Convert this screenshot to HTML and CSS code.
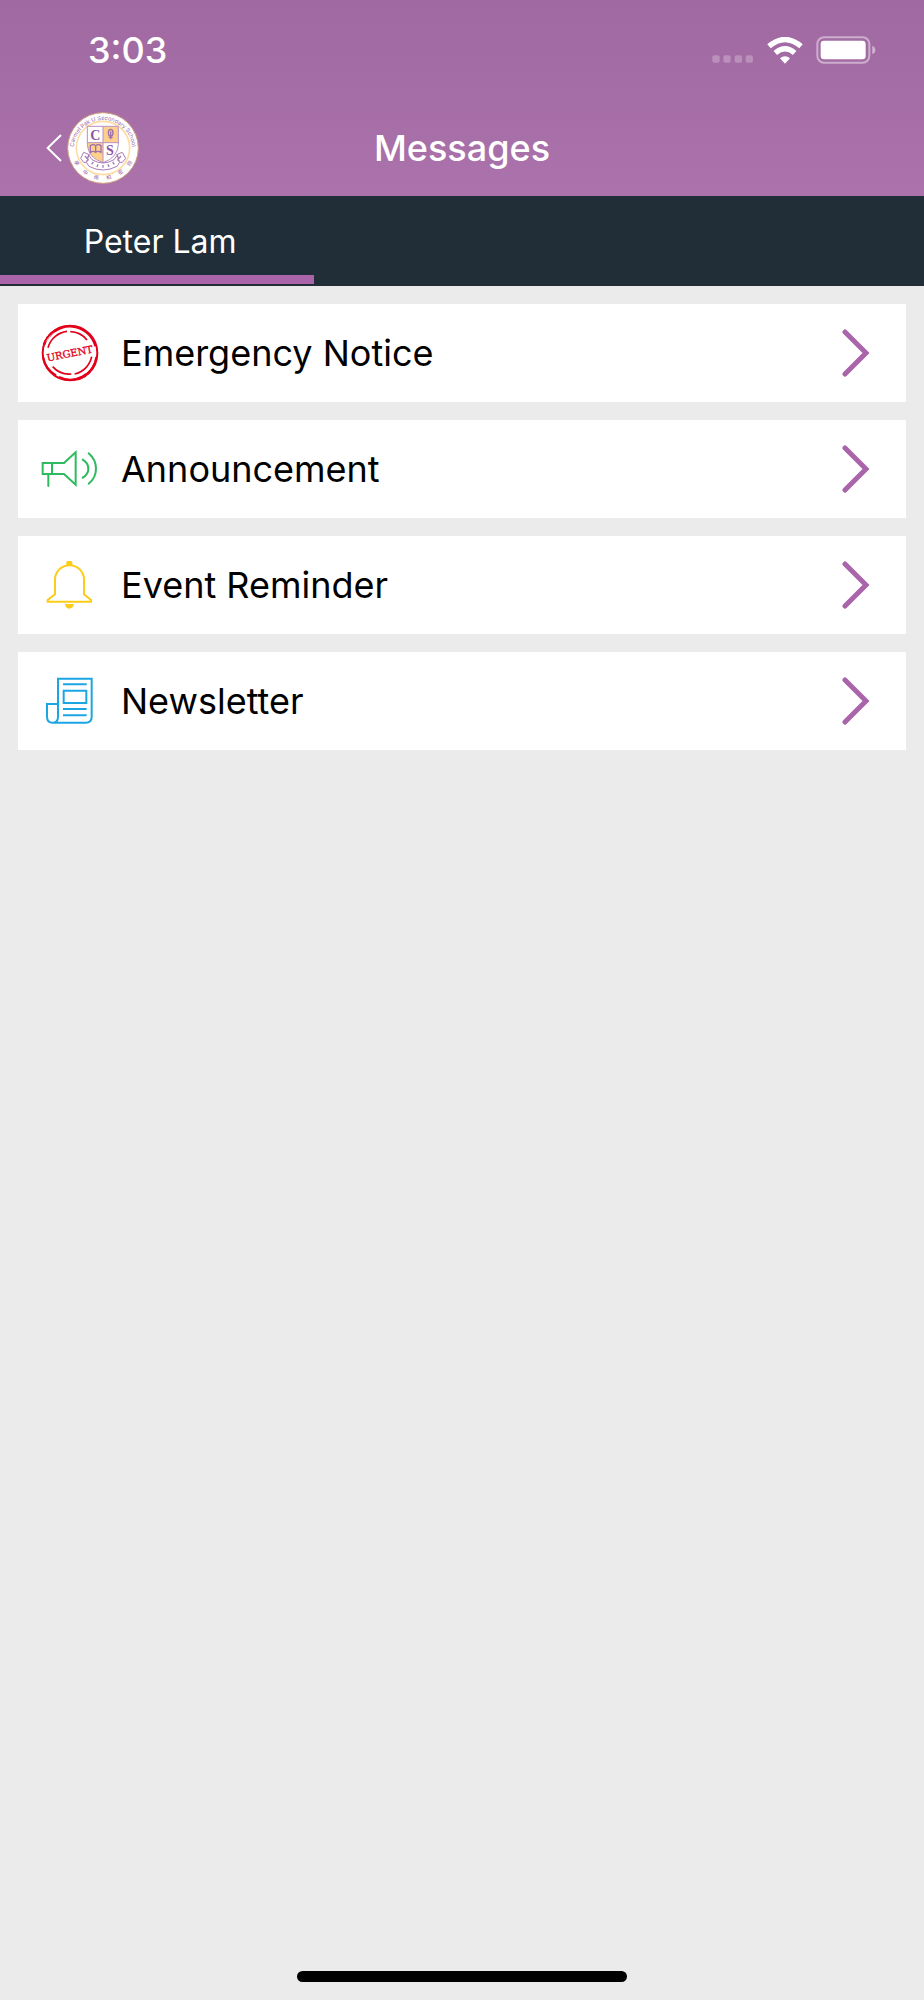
FILE: index.html
```html
<!DOCTYPE html>
<html lang="en">
<head>
<meta charset="utf-8">
<meta name="viewport" content="width=device-width, initial-scale=1">
<title>Messages</title>
<link rel="stylesheet" href="styles.css">
</head>
<body>
<header class="header">
  <div class="status">
    <time class="clock">3:03</time>
    <div class="indicators">
      <svg class="signal" viewBox="0 0 126 24" aria-hidden="true"><g fill="#fff" fill-opacity=".25"><rect x="1" y="1" width="22" height="22" rx="6"/><rect x="34" y="1" width="22" height="22" rx="6"/><rect x="68" y="1" width="22" height="22" rx="6"/><rect x="101" y="1" width="22" height="22" rx="6"/></g></svg>
      <svg class="wifi" viewBox="0 0 108 81" aria-hidden="true"><g fill="none" stroke="#fff" stroke-width="16"><path d="M6 28Q54-13 102 28"/><path d="M25 48Q54 23 83 48"/></g><path d="M39 64Q54 51 69 64L54 80Z" fill="#fff"/></svg>
      <svg class="battery" viewBox="0 0 180 84" aria-hidden="true"><rect x="4" y="4" width="156" height="76" rx="20" fill="none" stroke="#fff" stroke-opacity=".45" stroke-width="6"/><rect x="14" y="14" width="135" height="56" rx="10" fill="#fff"/><path d="M169 29Q178 33 178 42T169 55Z" fill="#fff" fill-opacity=".5"/></svg>
    </div>
  </div>
  <div class="nav">
    <button class="back" type="button" aria-label="Back">
      <svg class="back-arrow" viewBox="0 0 48 84" aria-hidden="true"><path d="M45 3L5 42L45 81" fill="none" stroke="#fff" stroke-width="6"/></svg>
      <svg class="crest" viewBox="0 0 216 216" aria-hidden="true">
        <defs><path id="motto-arc" d="M20 112A88 88 0 0 1 196 112"/></defs>
        <circle cx="108" cy="108" r="106" fill="#fff" stroke="#cf9d7c" stroke-width="3"/>
        <circle cx="108" cy="108" r="80" fill="none" stroke="#fddda4" stroke-width="5"/>
        <text class="crest-name"><textPath href="#motto-arc" startOffset="50%" text-anchor="middle">Carmel Pak U Secondary School</textPath></text>
        <g class="crest-han" text-anchor="middle">
          <text transform="translate(29 153) rotate(60)" y="6">學</text>
          <text transform="translate(55 181) rotate(36)" y="6">中</text>
          <text transform="translate(88 195) rotate(12)" y="6">雨</text>
          <text transform="translate(125 195) rotate(-12)" y="6">柏</text>
          <text transform="translate(160 180) rotate(-36)" y="6">密</text>
          <text transform="translate(187 153) rotate(-60)" y="6">迦</text>
        </g>
        <path d="M108 44H153V92H108ZM62 92H108V151Q66 137 62 102Z" fill="#fdd08b"/>
        <path d="M61 43H154V98Q152 137 108 152Q63 137 61 98ZM108 43V152M61 92H154" fill="none" stroke="#b98fc2" stroke-width="3"/>
        <text class="crest-letter" x="85" y="84" text-anchor="middle">C</text>
        <text class="crest-letter" x="129" y="128" text-anchor="middle">S</text>
        <g fill="none" stroke="#9f6eac" stroke-width="4"><ellipse cx="131" cy="62" rx="7" ry="10"/><path d="M131 58V82M125 76H137M70 101Q79 95 86 101Q93 95 102 101V121Q93 115 86 121Q79 115 70 121ZM86 101V121"/></g>
        <path d="M50 121L63 126L75 143Q108 163 141 143L153 126L166 121L176 139L166 151L158 151L150 163Q108 185 66 163L58 151L50 151L41 139Z" fill="#fff" stroke="#a97bb4" stroke-width="3"/>
        <path d="M54 132L65 145M162 132L151 145M74 157L79 150M90 165L93 157M108 167V159M126 165L123 157M142 157L137 150M66 126L59 150M150 126L157 150" fill="none" stroke="#a97bb4" stroke-width="4"/>
      </svg>
    </button>
    <h1 class="title">Messages</h1>
  </div>
</header>
<nav class="tabs" aria-label="Student">
  <button class="tab" type="button" aria-current="true">Peter Lam</button>
</nav>
<main class="list">
  <a class="card" href="#emergency">
    <svg class="icon" viewBox="0 0 180 180" aria-hidden="true">
      <g fill="none" stroke="#e2001a">
        <circle cx="90" cy="90" r="82" stroke-width="6"/>
        <path d="M29 39A79 79 0 0 1 166 70M169 102A79 79 0 0 1 57 162M10 103A80 80 0 0 0 48 157" stroke-width="6"/>
        <path d="M12 65A82 82 0 0 1 57 17M112 169A82 82 0 0 0 164 122" stroke-width="8" stroke-dasharray="17 2 9 3"/>
        <path d="M24 74A67 67 0 0 1 81 25M91 26A66 66 0 0 1 141 51M155 101A67 67 0 0 1 104 153M94 153A66 66 0 0 1 38 131" stroke-width="5"/>
        <path d="M18 56A80 80 0 0 1 43 29M137 151A76 76 0 0 0 157 125" stroke="#fff" stroke-width="2"/>
      </g>
      <text class="stamp" transform="translate(89 91) rotate(-11)" y="11" text-anchor="middle">URGENT</text>
    </svg>
    <span class="label">Emergency Notice</span>
    <svg class="chevron" viewBox="0 0 28 50" aria-hidden="true"><path d="M3 4L24 25L3 46"/></svg>
  </a>
  <a class="card" href="#announcement">
    <svg class="icon" viewBox="0 0 180 180" aria-hidden="true"><g fill="none" stroke="#2fb960" stroke-width="6" stroke-linecap="round"><path d="M8 72H72L107 40V137L72 105H8ZM36 72V105M25 105V141"/><path d="M128 62Q145 72 145 89T128 116M146 43Q168 62 168 89T146 134"/></g></svg>
    <span class="label">Announcement</span>
    <svg class="chevron" viewBox="0 0 28 50" aria-hidden="true"><path d="M3 4L24 25L3 46"/></svg>
  </a>
  <a class="card" href="#events">
    <svg class="icon" viewBox="0 0 180 180" aria-hidden="true"><path d="M45 74A43 43 0 0 1 132 74V118L153 135V140H23V135L45 118Z" fill="none" stroke="#fccd17" stroke-width="6"/><path d="M79 31V22Q79 18 84 18H92Q97 18 97 22V31ZM75 147H102Q99 161 88 161T75 147Z" fill="#fccd17"/></svg>
    <span class="label">Event Reminder</span>
    <svg class="chevron" viewBox="0 0 28 50" aria-hidden="true"><path d="M3 4L24 25L3 46"/></svg>
  </a>
  <a class="card" href="#newsletter">
    <svg class="icon" viewBox="0 0 180 180" aria-hidden="true"><path d="M54 99V23H155V137Q155 155 137 155H38Q21 155 21 137V99H54V137Q54 155 38 155M69 40H140M71 59H139V96H71ZM69 114H140M69 133H140" fill="none" stroke="#1ba6e3" stroke-width="6"/></svg>
    <span class="label">Newsletter</span>
    <svg class="chevron" viewBox="0 0 28 50" aria-hidden="true"><path d="M3 4L24 25L3 46"/></svg>
  </a>
</main>
<footer class="footer"><div class="home-bar"></div></footer>
</body>
</html>
```
FILE: styles.css
```css
* {
  box-sizing: border-box;
}

body {
  margin: 0;
  min-height: 100vh;
  display: flex;
  flex-direction: column;
  background: #ebebeb;
  color: #000;
  font-family: Inter, "Liberation Sans", sans-serif;
}

button {
  margin: 0;
  border: 0;
  background: none;
  color: inherit;
  font: inherit;
}

svg {
  display: block;
  flex: none;
}

.header {
  background: linear-gradient(#a069a1, #ab72ac);
  color: #fff;
}

.status {
  display: flex;
  justify-content: space-between;
  align-items: center;
  height: 100px;
  padding: 0 48px 0 88px;
}

.clock {
  font-size: 36px;
  line-height: 44px;
  font-weight: 500;
}

.indicators {
  display: flex;
  align-items: center;
  gap: 13px;
}

.signal {
  width: 42px;
  height: 8px;
  margin-top: 18px;
}

.wifi {
  width: 36px;
  height: 27px;
}

.battery {
  width: 60px;
  height: 28px;
}

.nav {
  display: grid;
  grid-template-columns: 1fr auto 1fr;
  align-items: center;
  height: 96px;
  padding: 0 46px;
}

.back {
  display: flex;
  align-items: center;
  gap: 5px;
  padding: 0;
  justify-self: start;
}

.back-arrow {
  width: 16px;
  height: 28px;
}

.crest {
  width: 72px;
  height: 72px;
}

.crest-name {
  font: 17px Inter, sans-serif;
  fill: #9d6aaa;
}

.crest-han {
  font: 400 15px "Noto Sans CJK TC", sans-serif;
  fill: #8f559f;
}

.crest-letter {
  font: 700 42px "Liberation Serif", serif;
  fill: #8f559f;
}

.title {
  margin: 0;
  font-size: 36px;
  line-height: 44px;
  font-weight: 500;
}

.tabs {
  display: flex;
  height: 90px;
  background: #212e37;
}

.tab {
  width: 34%;
  margin-bottom: 2px;
  padding: 12px 0 0 6px;
  border-bottom: 9px solid #a964aa;
  background: #1f2e38;
  color: #fff;
  font-size: 32px;
  line-height: 40px;
}

.list {
  flex: 1;
  display: flex;
  flex-direction: column;
  gap: 18px;
  padding: 18px;
}

.card {
  display: flex;
  align-items: center;
  gap: 21px;
  height: 98px;
  padding: 0 36px 0 22px;
  background: #fff;
  color: #000;
  text-decoration: none;
}

.icon {
  width: 60px;
  height: 60px;
}

.stamp {
  font: 400 30px "DejaVu Serif", serif;
  fill: #e2001a;
  stroke: #e2001a;
  stroke-width: 1;
}

.label {
  flex: 1;
  font-size: 36px;
  line-height: 44px;
}

.chevron {
  width: 28px;
  height: 50px;
  fill: none;
  stroke: #a964aa;
  stroke-width: 5;
  stroke-linecap: round;
}

.footer {
  display: flex;
  justify-content: center;
  padding-bottom: 18px;
}

.home-bar {
  width: 330px;
  height: 11px;
  border-radius: 6px;
  background: #000;
}
```
